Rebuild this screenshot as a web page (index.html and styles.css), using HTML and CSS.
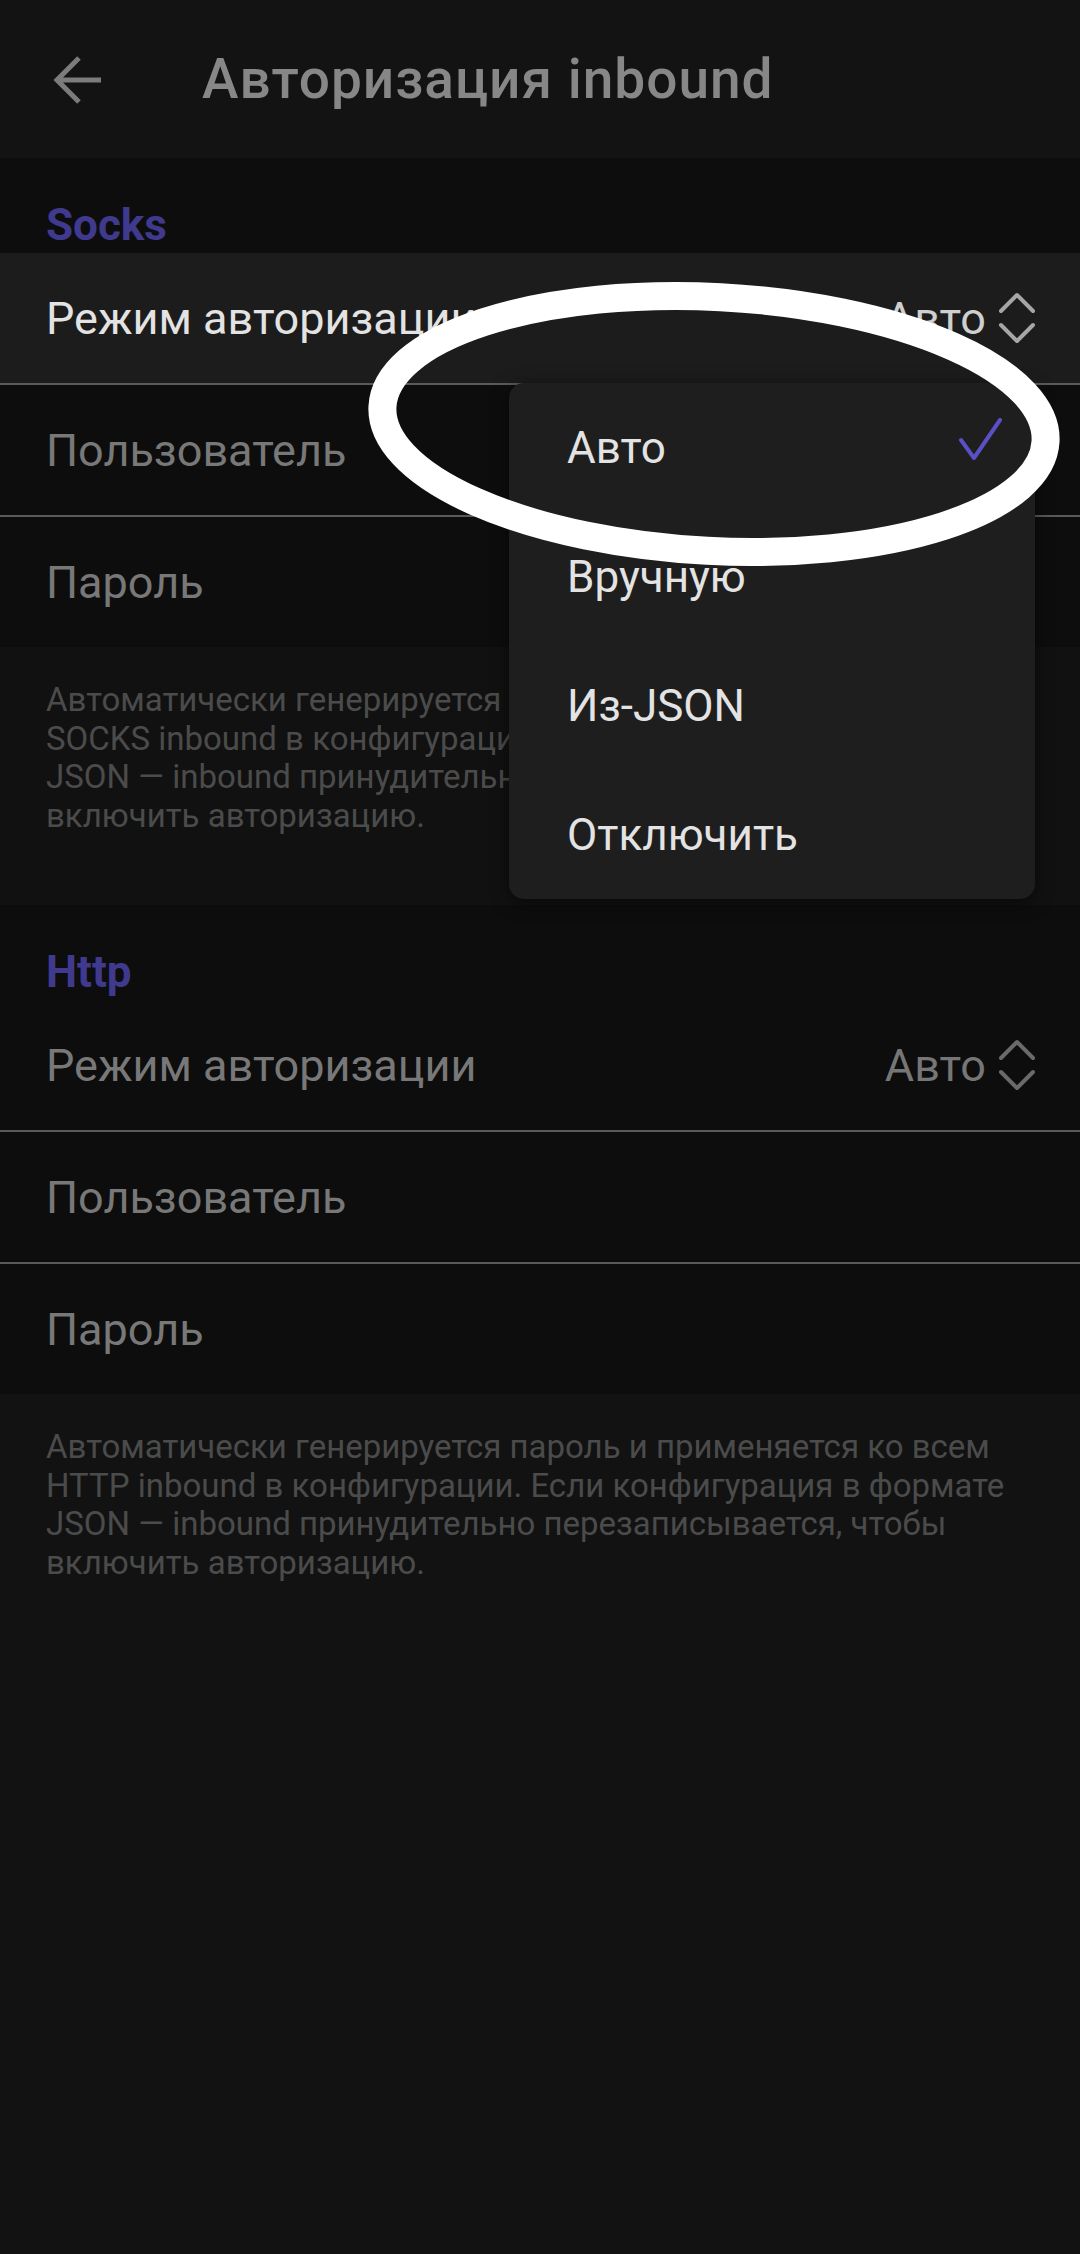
FILE: index.html
```html
<!DOCTYPE html>
<html lang="ru">
<head>
<meta charset="utf-8">
<title>Авторизация inbound</title>
<link rel="stylesheet" href="styles.css">
</head>
<body>
<div class="screen">
  <header class="appbar">
    <svg class="back" width="60" height="60" viewBox="0 0 60 60">
      <path d="M50 30 H7 M28 8 L6 30 L28 52" fill="none" stroke="#7c7c7c" stroke-width="5" stroke-linejoin="miter"/>
    </svg>
    <h1 class="title">Авторизация inbound</h1>
  </header>

  <section class="section">
    <div class="section-title">Socks</div>
    <div class="rows">
      <div class="row row-active">
        <span class="label">Режим авторизации</span>
        <span class="value">Авто
          <svg class="updown" width="38" height="54" viewBox="0 0 38 54">
            <path d="M3 20 L19 4 L35 20 M3 34 L19 50 L35 34" fill="none" stroke="currentColor" stroke-width="4" stroke-linecap="round" stroke-linejoin="round"/>
          </svg>
        </span>
      </div>
      <div class="row"><span class="label">Пользователь</span></div>
      <div class="row"><span class="label">Пароль</span></div>

      <div class="menu">
        <div class="menu-item">Авто
          <svg class="check" width="44" height="46" viewBox="0 0 44 46">
            <path d="M2 22 L15 40 L41 2" fill="none" stroke="#5a4fc4" stroke-width="4" stroke-linecap="round" stroke-linejoin="round"/>
          </svg>
        </div>
        <div class="menu-item">Вручную</div>
        <div class="menu-item">Из-JSON</div>
        <div class="menu-item">Отключить</div>
      </div>
    </div>
    <p class="desc">Автоматически генерируется пароль и применяется ко всем SOCKS inbound в конфигурации. Если конфигурация в формате JSON — inbound принудительно перезаписывается, чтобы включить авторизацию.</p>
  </section>

  <section class="section">
    <div class="section-title">Http</div>
    <div class="rows">
      <div class="row">
        <span class="label">Режим авторизации</span>
        <span class="value">Авто
          <svg class="updown" width="38" height="54" viewBox="0 0 38 54">
            <path d="M3 20 L19 4 L35 20 M3 34 L19 50 L35 34" fill="none" stroke="currentColor" stroke-width="4" stroke-linecap="round" stroke-linejoin="round"/>
          </svg>
        </span>
      </div>
      <div class="row"><span class="label">Пользователь</span></div>
      <div class="row"><span class="label">Пароль</span></div>
    </div>
    <p class="desc desc-last">Автоматически генерируется пароль и применяется ко всем HTTP inbound в конфигурации. Если конфигурация в формате JSON — inbound принудительно перезаписывается, чтобы включить авторизацию.</p>
  </section>

  <svg class="annotation" width="1080" height="700" viewBox="0 0 1080 700">
    <ellipse cx="714" cy="424" rx="332" ry="127" transform="rotate(3 714 424)" fill="none" stroke="#ffffff" stroke-width="28"/>
  </svg>
</div>
</body>
</html>
```

FILE: styles.css
```css
* { box-sizing: border-box; }

html, body {
  margin: 0;
  padding: 0;
  background: #121212;
}

body {
  font-family: Roboto, "Noto Sans", "DejaVu Sans", sans-serif;
  width: 1080px;
  min-height: 2254px;
}

.screen {
  position: relative;
  min-height: 2254px;
  background: #121212;
}

.appbar {
  height: 158px;
  background: #131313;
  display: flex;
  align-items: center;
  padding-left: 51px;
}

.back {
  display: block;
  margin-top: 2px;
}

.title {
  margin: 0 0 0 91px;
  font-size: 55px;
  font-weight: 500;
  color: #878787;
  letter-spacing: 1px;
  line-height: 1;
}

.section-title {
  height: 95px;
  padding: 41px 0 0 46px;
  font-size: 44px;
  line-height: 52px;
  font-weight: 700;
  color: #3f3a8e;
  background: #0d0d0d;
}

.rows {
  position: relative;
}

.row {
  height: 130px;
  display: flex;
  align-items: center;
  justify-content: space-between;
  padding: 0 44px 0 46px;
  background: #0d0d0d;
  font-size: 45px;
  color: #787878;
}

.row + .row {
  border-top: 2px solid #5a5a5a;
  height: 132px;
}

.row-active {
  background: #1c1c1c;
  color: #e3e3e3;
}

.value {
  display: flex;
  align-items: center;
  gap: 12px;
  color: #767676;
}

.row-active .value {
  color: #cfcfcf;
}

.updown {
  display: block;
  color: #6a6a6a;
}

.row-active .updown {
  color: #a6a6a6;
}

.desc {
  margin: 0;
  height: 258px;
  padding: 34px 46px 0 46px;
  background: #111111;
  font-size: 33px;
  line-height: 38.5px;
  color: #4b4b4b;
}

.desc-last {
  height: auto;
  padding-bottom: 0;
  background: #121212;
}

.menu {
  position: absolute;
  top: 130px;
  left: 509px;
  width: 526px;
  background: #1e1e1e;
  border-radius: 15px;
  box-shadow: 0 4px 18px rgba(0, 0, 0, 0.5);
  z-index: 2;
}

.menu-item {
  height: 129px;
  display: flex;
  align-items: center;
  justify-content: space-between;
  padding: 0 32px 0 58px;
  font-size: 44px;
  color: #e3e3e3;
}

.check {
  display: block;
  margin-bottom: 14px;
}

.annotation {
  position: absolute;
  left: 0;
  top: 0;
  z-index: 3;
  pointer-events: none;
}
```
